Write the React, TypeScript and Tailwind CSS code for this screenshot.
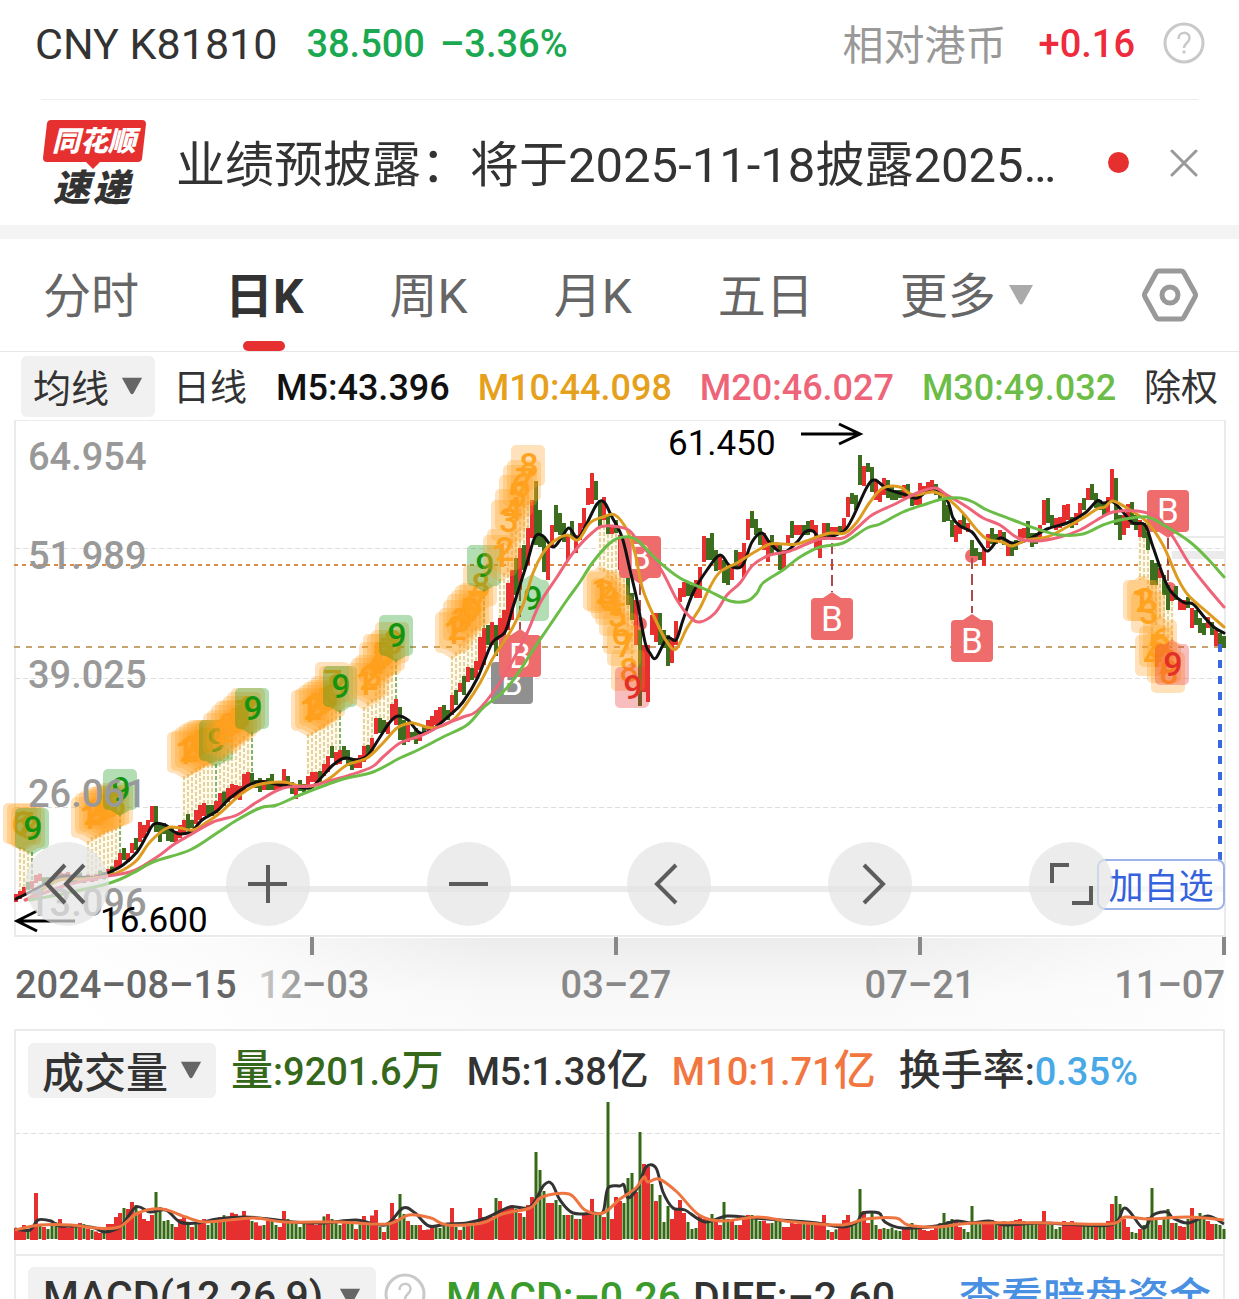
import { ReactNode } from "react";

type Point = [number, number];
type Tone = "orange" | "green" | "red";

interface Bar {
  x: number;
  a: number;
  b: number;
  up: boolean;
}

interface Mark {
  x: number;
  y: number;
  label: string;
  tone: Tone;
  below?: boolean;
}

// one trading day is 4 units wide
const STEP = 4;
const RED = "#e63030";
const GREEN = "#3d6e1f";

// x high low direction
const CANDLES = `16 474 482 r,20 471 479 r,24 467 475 r,36 455 463 r,48 457 463 g,60 452 458 r,76 454 462 g,92 456 462 r,108 449 457 r,
116 440 450 r,120 433 446 r,124 428 440 g,128 433 442 r,132 423 433 r,136 418 430 g,140 402 422 r,144 405 418 r,148 400 412 r,152 386 402 r,
156 386 412 g,160 403 422 g,164 403 414 g,168 406 421 g,172 408 422 g,176 411 423 r,180 405 418 r,184 400 413 r,188 394 410 g,192 400 408 g,
196 390 404 r,200 385 400 r,204 383 396 r,208 385 395 g,212 385 396 g,216 381 393 r,220 373 388 r,228 368 382 r,232 364 378 r,240 366 380 r,
244 354 372 r,248 352 366 r,252 353 365 g,256 360 368 g,260 358 372 g,264 360 370 r,268 358 370 g,272 354 370 g,276 362 372 r,280 362 370 r,
284 349 365 r,288 356 366 g,292 362 374 g,296 366 379 r,300 360 371 g,304 364 372 g,308 356 368 r,312 352 362 r,316 352 362 r,320 351 362 g,
324 344 356 r,328 336 352 r,332 326 338 g,336 332 345 r,340 330 344 r,344 326 340 g,348 330 346 g,352 340 350 g,356 338 348 r,360 335 348 r,
364 326 342 r,368 325 338 g,372 318 333 r,376 298 314 r,380 298 313 g,384 300 312 g,388 302 314 r,392 284 300 r,396 279 305 r,400 287 320 g,
404 300 325 g,408 305 322 r,412 312 320 g,416 308 324 g,420 312 321 r,424 306 314 g,428 300 310 r,432 296 310 r,436 290 305 r,440 287 303 r,
444 285 300 g,448 290 300 g,452 275 295 r,456 270 285 g,460 263 272 r,464 256 275 g,468 247 262 r,472 248 260 g,476 241 258 r,480 217 250 r,
484 208 245 r,488 205 225 g,492 202 225 r,496 205 236 g,500 198 220 r,504 190 215 r,508 163 210 r,512 150 200 r,516 138 175 g,520 128 170 r,
524 125 150 g,528 108 145 r,532 80 118 r,536 61 125 g,540 90 127 g,544 117 152 g,548 127 160 r,552 105 128 r,556 85 112 g,560 93 115 g,
564 103 122 g,568 115 140 r,572 101 118 g,576 115 133 r,580 103 120 r,584 88 108 r,588 68 85 r,592 53 84 r,596 61 80 g,600 80 106 g,
604 77 100 r,608 95 114 g,612 105 114 r,616 100 113 g,620 115 150 r,624 120 158 g,628 145 185 g,632 173 200 g,636 180 225 r,640 210 286 g,
644 225 272 r,648 225 282 r,652 195 215 r,656 193 222 r,660 193 225 g,664 210 228 g,668 215 246 g,672 218 243 r,676 201 225 r,680 168 182 r,
684 162 177 r,688 163 176 g,692 165 176 g,696 160 178 r,700 147 178 r,704 116 142 r,708 118 140 g,712 113 140 g,716 130 151 g,720 135 150 r,
724 140 163 g,728 148 165 g,732 145 160 r,736 130 148 g,740 132 147 r,744 123 157 r,748 99 120 r,752 91 108 g,756 99 115 g,760 108 125 g,
764 113 130 r,768 120 142 r,772 115 135 g,776 122 130 r,780 125 150 g,784 130 150 r,788 115 125 r,792 101 118 g,796 105 115 r,800 105 115 r,
804 105 115 g,808 101 115 g,812 100 112 r,816 105 130 r,820 120 138 r,824 103 120 r,828 103 116 g,832 107 118 r,836 107 116 r,840 106 115 g,
844 98 110 r,848 77 97 r,852 73 84 g,856 75 90 g,860 35 65 g,864 46 66 r,868 43 52 g,872 47 72 g,876 60 80 r,880 70 82 r,884 58 75 r,
888 60 78 g,892 67 80 g,896 70 80 g,900 70 78 g,904 65 78 r,908 64 78 g,912 75 86 g,916 75 85 r,920 63 85 r,924 66 72 r,928 62 70 r,
932 60 72 r,936 64 75 g,940 70 80 g,944 80 102 g,948 85 101 g,952 100 117 g,956 105 122 r,960 100 114 r,964 94 107 g,968 103 112 r,
972 120 136 g,976 128 136 g,980 132 140 g,984 128 146 r,988 114 128 r,992 108 124 g,996 114 124 g,1000 110 120 r,1004 112 125 g,
1008 122 136 r,1012 122 136 g,1016 120 130 g,1020 109 120 r,1024 108 118 r,1028 101 118 g,1032 113 127 g,1036 113 124 g,1040 105 118 r,
1044 80 105 r,1048 78 103 g,1052 95 108 g,1056 98 110 r,1060 97 108 r,1064 85 103 r,1068 84 100 r,1072 97 108 g,1076 93 105 r,1080 83 98 r,
1084 78 90 g,1088 68 80 r,1092 64 80 g,1096 73 88 g,1100 80 90 g,1104 82 95 g,1108 77 94 r,1112 49 80 r,1116 58 105 g,1120 95 120 g,
1124 95 115 r,1128 84 108 r,1132 82 105 g,1136 95 110 g,1140 100 117 r,1144 103 118 g,1148 112 130 g,1152 140 165 g,1156 143 165 g,
1160 148 158 r,1164 155 175 g,1168 165 190 g,1172 170 181 r,1176 166 180 g,1180 180 190 r,1184 180 190 r,1188 177 188 g,1192 188 208 r,
1196 190 205 g,1200 198 213 g,1204 203 215 g,1208 197 208 r,1212 202 215 g,1216 210 226 r,1220 213 225 g,1224 216 228 g`;

// x height direction
const VOLUMES = `16 11 r,20 10 r,24 14 r,28 8 g,32 12 r,36 46 r,40 15 g,44 12 r,48 10 g,60 20 r,64 13 r,72 12 r,80 16 r,92 9 g,100 6 r,108 15 r,112 15 r,
116 22 r,120 26 r,124 31 g,128 30 r,132 37 r,136 34 g,140 28 r,144 20 r,148 18 r,152 24 r,156 47 g,160 32 g,164 18 g,168 19 g,172 15 g,
176 12 r,180 20 r,184 22 r,192 12 r,204 20 r,208 14 g,220 22 r,236 25 r,240 22 r,244 28 r,248 22 r,252 18 g,264 14 g,268 18 r,280 12 r,
284 28 r,288 20 g,292 18 g,300 12 g,308 16 r,316 14 r,320 18 r,328 25 r,332 20 g,340 14 g,348 20 g,352 15 g,356 10 r,364 23 r,368 14 g,376 29 r,
380 12 g,384 7 r,388 14 g,392 36 r,396 20 r,400 45 g,404 25 g,408 18 r,412 14 g,420 14 r,424 9 r,432 12 r,440 11 g,448 14 g,452 31 r,456 12 g,
460 9 r,468 14 r,476 14 r,480 31 r,484 22 r,492 22 r,496 41 g,500 38 r,504 30 r,512 34 r,516 30 g,520 26 r,524 22 g,528 34 r,532 42 r,
536 87 g,540 69 g,544 48 g,548 36 r,552 36 r,556 39 g,560 34 g,564 24 g,568 24 r,572 24 g,576 20 r,584 24 r,588 24 r,592 40 r,596 26 g,600 26 g,
604 22 r,608 137 g,612 20 r,616 42 r,620 38 r,624 36 g,628 61 g,632 66 g,636 47 r,640 107 g,644 75 r,648 72 r,652 55 g,656 38 r,660 44 g,
664 17 g,668 33 g,672 20 r,676 30 r,680 39 r,684 26 r,688 17 g,692 10 g,696 11 g,700 24 r,704 20 r,708 20 g,712 25 g,716 18 r,720 14 r,
724 37 g,728 20 g,732 18 r,736 14 g,740 14 r,744 22 r,748 24 r,760 18 g,772 16 g,780 20 g,784 12 r,800 16 r,808 16 r,816 14 r,824 24 r,
828 9 g,832 7 r,840 12 r,848 24 r,852 14 g,856 18 g,860 50 g,864 28 r,868 16 r,872 26 g,876 14 g,880 10 r,888 10 g,900 8 g,908 12 r,
912 16 g,920 12 r,924 9 r,932 9 r,940 16 g,944 26 g,948 18 g,956 18 r,964 10 g,968 7 g,972 33 g,976 18 g,984 18 r,1000 16 r,1012 18 g,
1020 20 r,1028 14 g,1040 16 r,1044 28 r,1048 14 g,1056 10 g,1064 18 r,1080 14 r,1092 16 g,1100 16 g,1104 12 g,1108 18 r,1112 35 r,
1116 43 g,1120 35 g,1124 20 r,1128 12 r,1132 7 g,1136 6 g,1140 10 r,1144 14 g,1148 22 g,1152 51 g,1156 20 g,1160 14 r,1164 20 g,1168 30 g,
1172 16 r,1176 16 g,1180 13 r,1184 12 r,1188 20 g,1192 31 r,1196 22 g,1200 26 g,1204 20 g,1208 18 r,1212 15 r,1216 15 g,1220 14 g,1224 10 g`;

const MA5 =
  "16,479 30,472 47,463 63,456 80,457 97,457 110,452 123,445 137,432 147,415 154,404 165,405 173,411 180,414 192,411 202,400 217,391 230,378 247,366 257,362 267,362 280,365 293,366 310,368 320,359 333,345 345,338 357,340 368,335 380,317 390,302 398,296 408,300 420,313 433,309 450,295 463,282 478,257 492,223 505,212 513,187 527,143 535,117 543,116 553,127 562,117 569,108 578,118 587,103 597,84 604,82 612,97 622,117 630,150 637,180 645,222 650,233 656,238 667,218 676,220 683,200 693,173 707,150 720,135 730,146 742,146 752,122 762,113 770,123 783,133 797,122 805,112 813,111 820,118 833,116 845,110 853,97 867,67 875,60 887,69 903,74 917,78 933,68 947,80 953,98 960,106 972,112 980,123 988,131 1000,118 1012,123 1027,120 1047,109 1067,103 1085,93 1097,81 1103,83 1113,82 1123,92 1133,103 1145,105 1153,127 1168,167 1183,182 1193,184 1205,198 1215,208 1224,213";
const MA10 =
  "26,480 40,471 60,460 83,459 107,456 123,450 137,440 150,422 167,408 180,408 193,410 207,402 220,393 240,375 257,365 283,362 300,366 317,365 330,358 347,345 367,338 383,323 397,308 410,303 417,304 433,308 453,300 467,283 480,263 493,238 503,223 513,207 523,185 533,153 543,133 553,122 567,115 578,120 590,103 603,97 615,95 627,110 635,133 643,170 657,203 667,222 676,229 687,208 700,188 710,167 720,152 737,143 753,133 770,124 783,124 797,124 820,116 830,113 845,113 857,102 870,82 883,68 900,67 913,75 933,72 947,78 963,93 977,110 987,119 1002,122 1012,126 1027,120 1047,117 1067,107 1083,98 1097,89 1105,87 1113,81 1130,90 1147,102 1163,125 1177,157 1188,175 1207,192 1224,207";
const MA20 =
  "25,480 67,465 103,457 133,451 157,437 173,425 190,415 213,402 237,395 257,382 283,368 310,366 333,360 370,348 383,337 400,323 420,316 443,305 463,297 477,291 497,267 513,240 527,213 540,183 557,157 573,133 593,112 605,106 627,109 637,120 660,148 677,180 690,197 700,202 715,193 727,175 740,163 753,145 770,135 790,131 820,119 843,118 857,108 872,95 893,85 917,73 935,68 947,75 967,87 983,98 1000,105 1018,118 1037,121 1060,117 1080,110 1097,100 1113,92 1137,91 1157,97 1173,117 1190,145 1207,167 1224,187";
const MA30 =
  "30,480 67,473 110,463 133,453 153,442 190,430 217,413 237,400 260,388 277,385 300,375 340,360 373,352 400,338 420,329 443,317 467,305 483,288 503,272 517,255 533,230 550,205 567,180 580,162 593,142 610,123 623,117 637,120 657,140 680,158 707,170 730,181 747,181 757,173 763,163 783,150 800,137 820,127 843,123 867,108 880,104 903,92 923,85 943,79 960,78 973,82 987,90 1013,100 1040,110 1060,115 1083,114 1103,105 1120,100 1147,97 1167,107 1190,122 1207,138 1224,157";

const VOL5 =
  "15,129 30,130 38,120 51,121 59,126 79,126 95,128 105,132 121,126 136,107 150,112 166,110 180,122 198,123 217,119 245,117 269,119 293,122 324,123 356,120 385,125 403,108 415,113 429,126 447,124 467,123 486,118 510,107 530,107 544,85 552,84 560,100 573,113 593,113 603,112 608,88 620,86 624,85 628,98 638,87 646,67 656,68 663,92 673,108 685,110 705,122 727,116 754,118 794,121 817,123 843,127 857,122 863,113 879,113 885,122 902,128 936,126 956,121 971,123 989,121 1005,125 1042,123 1110,125 1125,108 1143,128 1153,115 1167,112 1173,118 1188,123 1208,116 1224,124";
const VOL10 =
  "15,130 40,125 71,125 95,128 119,127 138,113 162,109 186,117 206,122 253,118 285,122 340,122 387,124 409,115 431,118 447,125 482,123 502,114 530,108 542,97 569,94 585,110 603,113 620,99 636,88 644,77 648,82 659,79 677,92 699,115 723,121 758,117 794,122 843,125 865,119 896,118 908,125 936,127 975,123 1046,123 1110,124 1125,117 1149,119 1188,117 1224,120";

// tops of the sequence marks, counted from 1 at x, one step each
const SEQUENCES: { x: number; first?: number; tops: number[]; last?: Tone; below?: boolean }[] = [
  { x: 20, first: 6, tops: [383, 384, 387, 388], last: "green" },
  { x: 88, tops: [377, 373, 371, 369, 367, 366, 365, 363, 349], last: "green" },
  { x: 184, tops: [312, 310, 307, 304, 302, 300, 300, 300, 300], last: "green" },
  { x: 220, tops: [293, 290, 285, 281, 280, 276, 272, 268, 268], last: "green" },
  { x: 308, tops: [270, 268, 265, 262, 260, 256, 242, 246, 246], last: "green" },
  { x: 364, tops: [243, 238, 235, 222, 214, 214, 210, 202, 195], last: "green" },
  { x: 452, tops: [192, 188, 180, 174, 170, 165, 163, 145, 125], last: "green" },
  { x: 500, tops: [115, 109, 80, 69, 55, 45, 40, 25] },
  { x: 600, tops: [150, 152, 158, 164, 175, 193, 205, 230, 247], last: "red", below: true },
  { x: 1140, tops: [160, 160, 172, 215, 206, 200, 222, 232, 224], last: "red", below: true },
];

const MARKS: Mark[] = SEQUENCES.flatMap(({ x, first = 1, tops, last, below }) =>
  tops.map((y, i) => ({
    x: x + i * STEP,
    y,
    label: String(first + i),
    tone: last && i === tops.length - 1 ? last : "orange",
    below,
  }))
);

const TONES: Record<Tone, { box: string; text: string }> = {
  orange: { box: "rgba(255,160,30,0.3)", text: "#ffa420" },
  green: { box: "rgba(20,150,20,0.32)", text: "#129410" },
  red: { box: "rgba(232,50,50,0.32)", text: "#e23028" },
};

function fillBars(source: string, hasLow: boolean): Bar[] {
  const keys: Bar[] = source.split(",").map((item) => {
    const p = item.trim().split(" ");
    return { x: +p[0], a: +p[1], b: hasLow ? +p[2] : 0, up: p[p.length - 1] === "r" };
  });
  const bars: Bar[] = [];
  keys.forEach((key, i) => {
    bars.push(key);
    const next = keys[i + 1];
    if (!next) return;
    for (let x = key.x + STEP; x < next.x; x += STEP) {
      const t = (x - key.x) / (next.x - key.x);
      const wobble = ((x * 7) % 5) - 2;
      bars.push({
        x,
        a: key.a + (next.a - key.a) * t + wobble,
        b: key.b + (next.b - key.b) * t + wobble,
        up: (x * 13) % 28 > 12,
      });
    }
  });
  return bars;
}

function smooth(source: string) {
  const pts = source.split(" ").map((p) => p.split(",").map(Number) as Point);
  let d = `M${pts[0][0]} ${pts[0][1]}`;
  for (let i = 0; i < pts.length - 1; i++) {
    const p0 = pts[i - 1] ?? pts[i];
    const p1 = pts[i];
    const p2 = pts[i + 1];
    const p3 = pts[i + 2] ?? p2;
    d += `C${p1[0] + (p2[0] - p0[0]) / 6} ${p1[1] + (p2[1] - p0[1]) / 6} ${p2[0] - (p3[0] - p1[0]) / 6} ${p2[1] - (p3[1] - p1[1]) / 6} ${p2[0]} ${p2[1]}`;
  }
  return d;
}

const candles = fillBars(CANDLES, true);
const volumes = fillBars(VOLUMES, false);

function Triangle({ className }: { className: string }) {
  return (
    <svg viewBox="0 0 26 22" className={className} aria-hidden="true">
      <path d="M1 1h24L15 19q-2 3-4 0Z" fill="currentColor" />
    </svg>
  );
}

function HelpIcon() {
  return (
    <svg viewBox="0 0 42 42" className="size-[42px]" fill="none" stroke="#c9c9c9" strokeWidth="3" aria-hidden="true">
      <circle cx="21" cy="21" r="19" />
      <path d="M15.500 17c0-8 11-8 11-1 0 5-5.500 5-5.500 10" strokeWidth="2.500" />
      <circle cx="21" cy="30" r="1" strokeWidth="1.500" />
    </svg>
  );
}

function Logo() {
  return (
    <svg viewBox="0 -4 106 98" className="w-[106px] shrink-0" role="img" aria-label="同花顺速递">
      <path
        d="M10 2h91q4 0 4 4l-4 35q-1 3-4 3H59l-7 7-7-7H6q-4 0-4-4L6 5q1-3 4-3Z"
        fill={RED}
      />
      <text x="53" y="33" fontSize="28" fontWeight="900" fontStyle="italic" textAnchor="middle" fill="#fff">
        同花顺
      </text>
      <text x="12" y="83" fontSize="37" fontWeight="900" fontStyle="italic" fill="#333">
        速
      </text>
      <text x="52" y="83" fontSize="37" fontWeight="900" fontStyle="italic" fill="#333">
        递
      </text>
    </svg>
  );
}

function SequenceMark({ x, y, label, tone, below }: Mark) {
  const { box, text } = TONES[tone];
  const tip = below ? `M${x - 6} ${y}l6 -5 6 5Z` : `M${x - 10} ${y + 41}l10 6 10 -6Z`;
  return (
    <g>
      <rect x={x - 17} y={y} width="34" height="41" rx="5" fill={box} />
      <path d={tip} fill={box} />
      <text x={x + 1} y={y + 32} fontSize="34" fontWeight="500" textAnchor="middle" fill={text}>
        {label}
      </text>
    </g>
  );
}

function BuyMark({ x, y, down, gray }: { x: number; y: number; down?: boolean; gray?: boolean }) {
  const fill = gray ? "#909090" : "#ef6c6c";
  return (
    <g>
      <path d={down ? `M${x - 9} ${y + 42}l9 6 9 -6Z` : `M${x - 9} ${y}l9 -6 9 6Z`} fill={fill} />
      <rect x={x - 21} y={y} width="42" height="42" rx="4" fill={fill} />
      <text x={x} y={y + 33} fontSize="35" textAnchor="middle" fill="#fff">
        B
      </text>
    </g>
  );
}

function PriceChart() {
  const lowOf = (x: number) => candles.find((c) => c.x === x)?.b ?? 0;
  const highOf = (x: number) => candles.find((c) => c.x === x)?.a ?? 0;

  return (
    <svg viewBox="0 0 1239 609" className="block w-full" role="img" aria-label="日K线">
      <defs>
        <linearGradient id="shade" x1="0" y1="0" x2="0" y2="1">
          <stop offset="0" stopColor="#ececec" />
          <stop offset="0.6" stopColor="#f8f8f8" />
          <stop offset="1" stopColor="#fafafa" />
        </linearGradient>
        <linearGradient id="shadeFade" x1="0" y1="0" x2="1" y2="0">
          <stop offset="0" stopColor="#fff" />
          <stop offset="0.16" stopColor="#fff" stopOpacity="0.8" />
          <stop offset="0.4" stopColor="#fff" stopOpacity="0" />
          <stop offset="0.7" stopColor="#fff" stopOpacity="0" />
          <stop offset="1" stopColor="#fff" stopOpacity="0.8" />
        </linearGradient>
        <linearGradient id="dateFade" x1="0" y1="0" x2="1" y2="0">
          <stop offset="0" stopColor="#d0d0d0" />
          <stop offset="0.500" stopColor="#888" />
          <stop offset="1" stopColor="#888" />
        </linearGradient>
      </defs>

      {/* Frame and grid */}
      <rect x="15" y="0" width="1210" height="516" fill="none" stroke="#ebebeb" strokeWidth="2" />
      <g stroke="#dedede" strokeDasharray="5 3">
        <path d="M15 128.500H1225M15 258.500H1225M15 387.500H1225" />
      </g>
      <path d="M42 469H1225" stroke="#ebebeb" strokeWidth="6" />
      <path d="M1172 135H1226" stroke="#ebebeb" strokeWidth="8" />
      <path d="M1172 117H1226" stroke="#ebebeb" strokeWidth="2" />
      <path d="M14 145H1225" stroke="#d98b45" strokeWidth="2" strokeDasharray="4 4" />
      <path d="M14 227H1225" stroke="#c6a46f" strokeWidth="2" strokeDasharray="6 6" />

      {/* Leaders from the sequence marks to their candles */}
      {MARKS.map((m, i) => {
        const from = m.below ? lowOf(m.x) : m.y + 44;
        const to = m.below ? m.y : highOf(m.x);
        if (to <= from) return null;
        return (
          <g key={i}>
            <path d={`M${m.x} ${from}V${to}`} stroke="#fffbe8" strokeWidth="4" />
            <path
              d={`M${m.x} ${from}V${to}`}
              stroke={m.tone === "green" ? "#7fb57f" : "#e3d2a4"}
              strokeWidth="2"
              strokeDasharray="4 2"
            />
          </g>
        );
      })}

      <g fill="#ef6c6c">
        <circle cx="972" cy="136" r="7" />
        <circle cx="1170" cy="168" r="6" />
        <circle cx="640" cy="204" r="7" />
      </g>

      {candles.map((c) => (
        <rect
          key={c.x}
          x={c.x - 2}
          y={c.a}
          width="4"
          height={Math.max(c.b - c.a, 3)}
          fill={c.up ? RED : GREEN}
        />
      ))}

      <g stroke="#b04a4a" strokeWidth="2" strokeDasharray="11 5">
        <path d="M832 123V172" />
        <path d="M972 138V193" />
        <path d="M1168 118V165" />
        <path d="M520 170V210" />
        <path d="M640 164V212" />
      </g>
      <BuyMark x={640} y={116} down />
      <BuyMark x={512} y={242} gray />
      <BuyMark x={520} y={215} />
      <BuyMark x={832} y={178} />
      <BuyMark x={972} y={200} />
      <BuyMark x={1168} y={70} down />

      {MARKS.map((m, i) => (
        <SequenceMark key={i} {...m} />
      ))}
      <g>
        <path d="M522 160l10 -6 10 6Z" fill={TONES.green.box} />
        <rect x="516" y="160" width="33" height="41" rx="5" fill={TONES.green.box} />
        <text x="533" y="190" fontSize="34" fontWeight="500" textAnchor="middle" fill={TONES.green.text}>
          9
        </text>
      </g>

      {/* Moving averages */}
      <g fill="none" strokeWidth="3" strokeLinejoin="round" strokeLinecap="round">
        <path d={smooth(MA5)} stroke="#111" />
        <path d={smooth(MA10)} stroke="#dd9c20" />
        <path d={smooth(MA20)} stroke="#ee6479" />
        <path d={smooth(MA30)} stroke="#6cbd48" />
      </g>

      {/* Price labels */}
      <g fontSize="38" fontWeight="500" fill="#999">
        <text x="28" y="50">64.954</text>
        <text x="28" y="149">51.989</text>
        <text x="28" y="268">39.025</text>
        <text x="28" y="387">26.061</text>
        <text x="28" y="496">13.096</text>
      </g>
      <g fontSize="35" fill="#000">
        <text x="668" y="35">61.450</text>
        <text x="100" y="512">16.600</text>
      </g>
      <g fill="none" stroke="#000" strokeWidth="3">
        <path d="M801 14H859M839 4L860 14L839 24" />
        <path d="M75 501H17M37 491L17 501L37 511" />
      </g>
      <path d="M1220 224V440" stroke="#3b68e0" strokeWidth="4" strokeDasharray="8 8" />

      {/* Date axis */}
      <rect x="14" y="518" width="1211" height="91" fill="url(#shade)" />
      <rect x="14" y="518" width="1211" height="91" fill="url(#shadeFade)" />
      <path d="M312 517V535M616 517V535M920 517V535M1224 517V535" stroke="#888" strokeWidth="4" />
      <g fontSize="38" fontWeight="500" fill="#888">
        <text x="15" y="578" fill="#666">2024–08–15</text>
        <text x="314" y="578" textAnchor="middle" fill="url(#dateFade)">12–03</text>
        <text x="616" y="578" textAnchor="middle">03–27</text>
        <text x="920" y="578" textAnchor="middle">07–21</text>
        <text x="1225" y="578" textAnchor="end">11–07</text>
      </g>
    </svg>
  );
}

function VolumeChart() {
  return (
    <svg viewBox="0 0 1239 140" className="block w-full" role="img" aria-label="成交量">
      <path d="M15 33.500H1225" stroke="#dedede" strokeDasharray="5 3" />
      {volumes.map((v) =>
        v.up ? (
          <rect key={v.x} x={v.x - 2} y={139 - v.a} width="4" height={v.a + 1} fill={RED} />
        ) : (
          <g key={v.x}>
            <rect x={v.x - 2} y={139 - v.a} width="4" height={v.a} fill="#94b97c" />
            <rect x={v.x - 1} y={139 - v.a} width="2" height={v.a} fill="#3a6420" />
          </g>
        )
      )}
      <g fill="none" strokeWidth="3" strokeLinejoin="round">
        <path d={smooth(VOL5)} stroke="#333" />
        <path d={smooth(VOL10)} stroke="#ee7540" />
      </g>
    </svg>
  );
}

function RoundButton({ label, children }: { label: string; children: ReactNode }) {
  return (
    <button
      type="button"
      aria-label={label}
      className="flex size-[84px] items-center justify-center rounded-full bg-[#e4e4e4]/70 text-[#5c5c5c]"
    >
      <svg viewBox="0 0 48 48" className="size-12" fill="none" stroke="currentColor" strokeWidth="4">
        {children}
      </svg>
    </button>
  );
}

const TABS = ["分时", "日K", "周K", "月K", "五日"];

export default function App() {
  return (
    <div className="h-screen overflow-hidden bg-white font-[Roboto,'Noto_Sans_CJK_SC',sans-serif] whitespace-nowrap text-[#333]">
      {/* Quote */}
      <header className="flex h-[99px] items-center pr-[34px] pb-2.5 pl-[35px] text-[38px]">
        <span className="text-[43px]">CNY K81810</span>
        <span className="ml-[29px] font-medium text-[#1aa850]">38.500</span>
        <span className="ml-[15px] font-medium text-[#1aa850]">–3.36%</span>
        <span className="ml-auto pt-1 text-[41px] text-[#999]">相对港币</span>
        <span className="ml-[32px] font-medium text-[#ee2b3c]">+0.16</span>
        <button type="button" aria-label="帮助" className="mb-1 ml-[28px]">
          <HelpIcon />
        </button>
      </header>

      {/* News */}
      <section className="mx-[41px] flex h-[126px] items-center border-t border-[#ededed]">
        <Logo />
        <a href="#news" className="ml-[29px] min-w-0 truncate pt-1.5 text-[49px]">
          业绩预披露：将于2025-11-18披露2025…
        </a>
        <span className="mr-[41px] ml-auto size-[21px] shrink-0 rounded-full bg-[#e63030]" />
        <button type="button" aria-label="关闭" className="shrink-0">
          <svg viewBox="0 0 28 28" className="size-7" stroke="#999" strokeWidth="3" strokeLinecap="round">
            <path d="M2 2l24 24M26 2L2 26" />
          </svg>
        </button>
      </section>
      <div className="h-[14px] bg-[#f4f4f4]" />

      {/* Period tabs */}
      <nav className="flex h-[113px] items-center gap-[86px] border-b border-[#e8e8e8] pr-[41px] pl-[43px] text-[48px] text-[#666]">
        {TABS.map((tab) => (
          <button
            key={tab}
            type="button"
            className={
              tab === "日K" ? "relative flex h-full items-center pt-1 font-bold text-[#333]" : "pt-1"
            }
          >
            {tab}
            {tab === "日K" && (
              <span className="absolute bottom-0 left-1/2 h-[10px] w-[42px] -translate-x-1/2 rounded-full bg-[#e63030]" />
            )}
          </button>
        ))}
        <button type="button" className="flex items-center gap-[12px]">
          <span className="pt-1">更多</span>
          <Triangle className="w-[26px] text-[#aaa]" />
        </button>
        <button type="button" aria-label="设置" className="ml-auto">
          <svg viewBox="0 0 56 54" className="w-14" fill="none" stroke="#999" strokeWidth="5" strokeLinejoin="round">
            <path d="M17 3h22q2 0 3 2l11 20q1 2 0 4L42 49q-1 2-3 2H17q-2 0-3-2L3 29q-1-2 0-4L14 5q1-2 3-2Z" />
            <circle cx="28" cy="27" r="8" />
          </svg>
        </button>
      </nav>

      {/* Moving average legend */}
      <div className="flex h-[68px] items-center pr-[21px] pl-[21px] text-[36px] font-medium">
        <button type="button" className="flex h-[61px] items-center gap-3 rounded-md bg-[#f1f1f1] px-3 text-[38px] font-normal">
          <span className="pt-1.5">均线</span>
          <Triangle className="w-[22px] text-[#666]" />
        </button>
        <span className="ml-[18px] pt-1.5 text-[37px] font-normal">日线</span>
        <div className="ml-[29px] flex flex-1 justify-between pt-1.5">
          <span className="text-[#111]">M5:43.396</span>
          <span className="text-[#e5a01c]">M10:44.098</span>
          <span className="text-[#ee6479]">M20:46.027</span>
          <span className="text-[#6cbd48]">M30:49.032</span>
          <button type="button" className="text-[37px] font-normal">
            除权
          </button>
        </div>
      </div>

      {/* Candles */}
      <section className="relative">
        <PriceChart />
        <button
          type="button"
          className="absolute top-[439px] right-[14px] h-[51px] w-[128px] rounded-lg border-2 border-[#9db4ea] bg-white/60 pt-1.5 text-[35px] leading-none text-[#3663dd]"
        >
          加自选
        </button>
        <div className="absolute top-[422px] right-[126px] left-[25px] flex justify-between">
          <RoundButton label="最早">
            <path d="M22 5L4 24L22 43M41 5L23 24L41 43" />
          </RoundButton>
          <RoundButton label="放大">
            <path d="M4 24H43M24 5V43" />
          </RoundButton>
          <RoundButton label="缩小">
            <path d="M4 24H43" />
          </RoundButton>
          <RoundButton label="向左">
            <path d="M31 5L12 24L31 43" />
          </RoundButton>
          <RoundButton label="向右">
            <path d="M18 5L37 24L18 43" />
          </RoundButton>
          <RoundButton label="全屏">
            <path d="M22 5H5V23M44 26V43H25" />
          </RoundButton>
        </div>
      </section>

      {/* Volume */}
      <section className="relative h-[225px]">
        <div className="absolute inset-x-[14px] inset-y-0 border-x-2 border-t-2 border-[#ebebeb]" />
        <div className="relative flex h-[71px] items-end pb-0.5 pl-7 text-[38px] font-medium">
          <button type="button" className="flex h-[55px] items-center gap-3 rounded-md bg-[#f1f1f1] px-[14px] text-[42px]">
            <span className="pt-1.5">成交量</span>
            <Triangle className="w-[22px] text-[#666]" />
          </button>
          <div className="flex h-[55px] items-center gap-[23px] pl-[15px]">
            <span className="text-[#35681a]">
              <span className="text-[42px]">量</span>:9201.6<span className="text-[42px]">万</span>
            </span>
            <span>
              M5:1.38<span className="text-[42px]">亿</span>
            </span>
            <span className="text-[#f2763f]">
              M10:1.71<span className="text-[42px]">亿</span>
            </span>
            <span>
              <span className="text-[42px]">换手率</span>:<span className="text-[#48a9e6]">0.35%</span>
            </span>
          </div>
        </div>
        <div className="relative">
          <VolumeChart />
        </div>
      </section>

      {/* MACD */}
      <section className="mx-[14px] flex border-2 border-b-0 border-[#ebebeb] px-3 pt-[11px] pb-8 text-[41px] font-medium">
        <button type="button" className="flex h-[60px] items-center gap-4 rounded-md bg-[#f1f1f1] px-[15px]">
          MACD(12,26,9)
          <Triangle className="w-[22px] text-[#666]" />
        </button>
        <button type="button" aria-label="MACD帮助" className="mr-[20px] ml-2 self-start pt-1.5">
          <HelpIcon />
        </button>
        <span className="text-[#3a9a2c]">MACD:–0.26</span>
        <span className="ml-3">DIFF:–2.60</span>
        <a href="#funds" className="ml-auto text-[42px] text-[#4a90e2]">
          查看暗盘资金
        </a>
      </section>
    </div>
  );
}
